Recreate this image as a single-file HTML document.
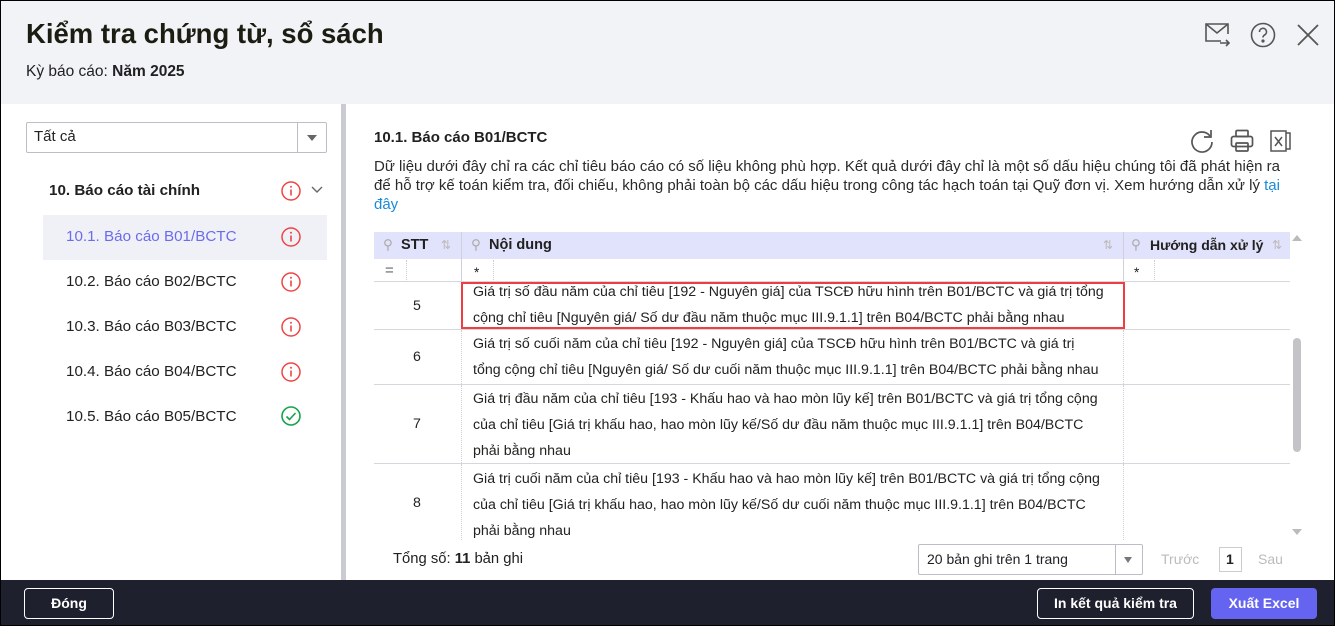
<!DOCTYPE html>
<html><head><meta charset="utf-8"><style>
*{box-sizing:border-box;margin:0;padding:0}
body{width:1335px;height:626px;overflow:hidden;font-family:"Liberation Sans",sans-serif;color:#212121;background:#fff;position:relative}
.abs{position:absolute}
.frame{position:absolute;left:0;top:0;width:1335px;height:626px;border:1px solid #000;pointer-events:none;z-index:10}
.hdr{left:0;top:0;width:1335px;height:104px;background:#f2f3f7}
.t{font-size:13.5px;white-space:nowrap}
.ic{position:absolute}
.row{position:absolute;left:374px;width:916px;border-bottom:1px solid #d6d6dc}
.cell{position:absolute;font-size:14.2px;line-height:26px;color:#222;white-space:nowrap}
.vl{position:absolute;top:0;bottom:0;border-left:1px dotted #cfcfd6}
</style></head><body>
<div class="frame"></div>
<div class="abs hdr"></div>
<div class="abs" style="left:26px;top:18px;font-size:27.5px;font-weight:bold;color:#1b1c12">Kiểm tra chứng từ, sổ sách</div>
<div class="abs t" style="left:26px;top:63px;font-size:15.5px">Kỳ báo cáo: <b>Năm 2025</b></div>
<svg class="ic" style="left:1204px;top:22px" width="28" height="26" viewBox="0 0 28 26" fill="none" stroke="#555" stroke-width="1.6"><path d="M17 19H2V2h22v10"/><path d="M2 2l11 9 11-9"/><path d="M16 21h9M22 18l3 3-3 3"/></svg>
<svg class="ic" style="left:1250px;top:22px" width="26" height="26" viewBox="0 0 26 26" fill="none" stroke="#555" stroke-width="1.6"><circle cx="13" cy="13" r="11.5"/><path d="M9.5 10a3.5 3.5 0 1 1 5 3c-1 .6-1.5 1.2-1.5 2.5"/><circle cx="13" cy="19" r=".8" fill="#555"/></svg>
<svg class="ic" style="left:1297px;top:24px" width="22" height="22" viewBox="0 0 22 22" stroke="#555" stroke-width="1.8"><path d="M1 1l20 20M21 1L1 21"/></svg>
<div class="abs" style="left:341px;top:104px;width:5px;height:476px;background:#c9cad3"></div>
<div class="abs" style="left:26px;top:122px;width:301px;height:31px;border:1px solid #bdbdc7;border-radius:2px"></div>
<div class="abs t" style="left:34px;top:128px;font-size:15px">Tất cả</div>
<div class="abs" style="left:297px;top:123px;width:1px;height:29px;background:#bdbdc7"></div>
<div class="abs" style="left:307px;top:135px;border-left:5px solid transparent;border-right:5px solid transparent;border-top:6px solid #666"></div>
<div class="abs t" style="left:49px;top:182px;font-size:15.2px;font-weight:bold">10. Báo cáo tài chính</div>
<svg class="ic" style="left:311px;top:186px" width="12" height="8" fill="none" stroke="#666" stroke-width="1.4"><path d="M1 1l5 5 5-5"/></svg>
<div class="abs" style="left:43px;top:215px;width:284px;height:45px;background:#f0f1f6"></div>
<div class="abs t" style="left:66px;top:228px;font-size:15.2px;color:#6b6bed">10.1. Báo cáo B01/BCTC</div>
<div class="abs t" style="left:66px;top:273px;font-size:15.2px">10.2. Báo cáo B02/BCTC</div>
<div class="abs t" style="left:66px;top:318px;font-size:15.2px">10.3. Báo cáo B03/BCTC</div>
<div class="abs t" style="left:66px;top:363px;font-size:15.2px">10.4. Báo cáo B04/BCTC</div>
<div class="abs t" style="left:66px;top:408px;font-size:15.2px">10.5. Báo cáo B05/BCTC</div>
<svg width="0" height="0" style="position:absolute"><defs><g id="inf"><circle cx="10" cy="10" r="9" fill="none" stroke="#ef4444" stroke-width="1.5"/><path d="M10 8.5v6" stroke="#ef4444" stroke-width="1.6"/><circle cx="10" cy="5.8" r="1" fill="#ef4444"/></g></defs></svg>
<svg class="ic" style="left:281px;top:181px" width="20" height="20"><use href="#inf"/></svg>
<svg class="ic" style="left:281px;top:227px" width="20" height="20"><use href="#inf"/></svg>
<svg class="ic" style="left:281px;top:272px" width="20" height="20"><use href="#inf"/></svg>
<svg class="ic" style="left:281px;top:317px" width="20" height="20"><use href="#inf"/></svg>
<svg class="ic" style="left:281px;top:362px" width="20" height="20"><use href="#inf"/></svg>
<svg class="ic" style="left:281px;top:406px" width="20" height="20" fill="none" stroke="#16a34a" stroke-width="1.6"><circle cx="10" cy="10" r="9"/><path d="M5.5 10.5l3 3 6-6.5"/></svg>
<div class="abs t" style="left:374px;top:129px;font-size:15px;font-weight:bold">10.1. Báo cáo B01/BCTC</div>
<svg class="ic" style="left:1189px;top:128px" width="26" height="26" fill="none" stroke="#555" stroke-width="1.7"><path d="M21 8A10 10 0 1 0 23 14"/><path d="M22 2v7h-7" /></svg>
<svg class="ic" style="left:1230px;top:129px" width="24" height="24" fill="none" stroke="#555" stroke-width="1.7"><rect x="6" y="1.5" width="12" height="6" rx="1"/><rect x="1.5" y="7.5" width="21" height="10" rx="2"/><rect x="6" y="14" width="12" height="8" rx="1"/></svg>
<svg class="ic" style="left:1270px;top:129px" width="22" height="24" fill="none" stroke="#555" stroke-width="1.5"><rect x="1" y="2" width="15" height="20"/><path d="M16 4h4v16h-4"/><path d="M5 8l7 9M12 8l-7 9"/></svg>
<div class="abs" style="left:374px;top:157px;width:935px;font-size:15px;line-height:19px;color:#2a2a2a">Dữ liệu dưới đây chỉ ra các chỉ tiêu báo cáo có số liệu không phù hợp. Kết quả dưới đây chỉ là một số dấu hiệu chúng tôi đã phát hiện ra<br>để hỗ trợ kế toán kiểm tra, đối chiếu, không phải toàn bộ các dấu hiệu trong công tác hạch toán tại Quỹ đơn vị. Xem hướng dẫn xử lý <span style="color:#1a8ad8">tại<br>đây</span></div>
<div class="abs" style="left:374px;top:232px;width:916px;height:27px;background:#e1e2fb"></div>
<div class="abs" style="left:461px;top:232px;width:1px;height:50px;background:#cfd0dc"></div>
<div class="abs" style="left:1123px;top:232px;width:1px;height:50px;background:#cfd0dc"></div>
<div class="abs t" style="left:383px;top:237px;color:#aaa">⚲</div>
<div class="abs t" style="left:401px;top:237px;font-weight:bold;font-size:14.5px">STT</div>
<div class="abs t" style="left:441px;top:238px;color:#bbb;font-size:12px">⇅</div>
<div class="abs t" style="left:471px;top:237px;color:#aaa">⚲</div>
<div class="abs t" style="left:489px;top:237px;font-weight:bold;font-size:14.5px">Nội dung</div>
<div class="abs t" style="left:1103px;top:238px;color:#bbb;font-size:12px">⇅</div>
<div class="abs t" style="left:1131px;top:237px;color:#aaa">⚲</div>
<div class="abs t" style="left:1150px;top:237px;font-weight:bold;font-size:14px">Hướng dẫn xử lý</div>
<div class="abs t" style="left:1272px;top:238px;color:#bbb;font-size:12px">⇅</div>
<div class="abs" style="left:374px;top:259px;width:916px;height:23px;border-bottom:1px solid #d6d6dc"></div>
<div class="abs t" style="left:385px;top:262px;color:#666;font-size:15px">=</div>
<div class="abs" style="left:406px;top:260px;height:22px;border-left:1px dotted #ccc"></div>
<div class="abs t" style="left:474px;top:265px">*</div>
<div class="abs" style="left:493px;top:260px;height:22px;border-left:1px dotted #ccc"></div>
<div class="abs t" style="left:1134px;top:265px">*</div>
<div class="abs" style="left:1154px;top:260px;height:22px;border-left:1px dotted #ccc"></div>

<div class="row" style="top:282px;height:48px"><div class="cell" style="left:39px;top:11px">5</div><div class="vl" style="left:87px"></div><div class="vl" style="left:749px"></div>
<div class="cell" style="left:99px;top:-3px">Giá trị số đầu năm của chỉ tiêu [192 - Nguyên giá] của TSCĐ hữu hình trên B01/BCTC và giá trị tổng<br>cộng chỉ tiêu [Nguyên giá/ Số dư đầu năm thuộc mục III.9.1.1] trên B04/BCTC phải bằng nhau</div></div>
<div class="abs" style="left:461px;top:282px;width:664px;height:47px;border:2px solid #ef3e42"></div>
<div class="row" style="top:330px;height:55px"><div class="cell" style="left:39px;top:14px">6</div><div class="vl" style="left:87px"></div><div class="vl" style="left:749px"></div>
<div class="cell" style="left:99px;top:1px">Giá trị số cuối năm của chỉ tiêu [192 - Nguyên giá] của TSCĐ hữu hình trên B01/BCTC và giá trị<br>tổng cộng chỉ tiêu [Nguyên giá/ Số dư cuối năm thuộc mục III.9.1.1] trên B04/BCTC phải bằng nhau</div></div>
<div class="row" style="top:385px;height:79px"><div class="cell" style="left:39px;top:26px">7</div><div class="vl" style="left:87px"></div><div class="vl" style="left:749px"></div>
<div class="cell" style="left:99px;top:1px">Giá trị đầu năm của chỉ tiêu [193 - Khấu hao và hao mòn lũy kế] trên B01/BCTC và giá trị tổng cộng<br>của chỉ tiêu [Giá trị khấu hao, hao mòn lũy kế/Số dư đầu năm thuộc mục III.9.1.1] trên B04/BCTC<br>phải bằng nhau</div></div>
<div class="row" style="top:464px;height:76px;border-bottom:none"><div class="cell" style="left:39px;top:26px">8</div><div class="vl" style="left:87px"></div><div class="vl" style="left:749px"></div>
<div class="cell" style="left:99px;top:2px">Giá trị cuối năm của chỉ tiêu [193 - Khấu hao và hao mòn lũy kế] trên B01/BCTC và giá trị tổng cộng<br>của chỉ tiêu [Giá trị khấu hao, hao mòn lũy kế/Số dư cuối năm thuộc mục III.9.1.1] trên B04/BCTC<br>phải bằng nhau</div></div>
<div class="abs" style="left:1292px;top:235px;border-left:5px solid transparent;border-right:5px solid transparent;border-bottom:6px solid #bbb"></div>
<div class="abs" style="left:1293px;top:338px;width:8px;height:114px;background:#c4c4c8;border-radius:4px"></div>
<div class="abs" style="left:1292px;top:529px;border-left:5px solid transparent;border-right:5px solid transparent;border-top:6px solid #bbb"></div>
<div class="abs" style="left:346px;top:540px;width:989px;height:40px;background:#fff"></div>
<div class="abs t" style="left:393px;top:551px;font-size:14.8px">Tổng số: <b>11</b> bản ghi</div>
<div class="abs" style="left:918px;top:544px;width:225px;height:31px;border:1px solid #bdbdc7;border-radius:2px"></div>
<div class="abs" style="left:1115px;top:545px;width:1px;height:29px;background:#bdbdc7"></div>
<div class="abs t" style="left:927px;top:551px;font-size:14px">20 bản ghi trên 1 trang</div>
<div class="abs" style="left:1124px;top:557px;border-left:4px solid transparent;border-right:4px solid transparent;border-top:6px solid #777"></div>
<div class="abs t" style="left:1161px;top:551px;font-size:14px;color:#bbb">Trước</div>
<div class="abs" style="left:1219px;top:547px;width:23px;height:25px;border:1px solid #ccc"></div>
<div class="abs t" style="left:1226px;top:551px;font-size:14px;font-weight:bold">1</div>
<div class="abs t" style="left:1258px;top:551px;font-size:14px;color:#bbb">Sau</div>
<div class="abs" style="left:0;top:580px;width:1335px;height:46px;background:#1f202e"></div>
<div class="abs" style="left:24px;top:588px;width:90px;height:31px;border:1px solid #fff;border-radius:4px;color:#fff;font-size:14px;font-weight:bold;text-align:center;line-height:29px">Đóng</div>
<div class="abs" style="left:1037px;top:588px;width:157px;height:31px;border:1px solid #fff;border-radius:4px;color:#fff;font-size:14px;font-weight:bold;text-align:center;line-height:29px">In kết quả kiểm tra</div>
<div class="abs" style="left:1211px;top:588px;width:106px;height:31px;background:#6464f0;border-radius:4px;color:#fff;font-size:14px;font-weight:bold;text-align:center;line-height:31px">Xuất Excel</div>
</body></html>
